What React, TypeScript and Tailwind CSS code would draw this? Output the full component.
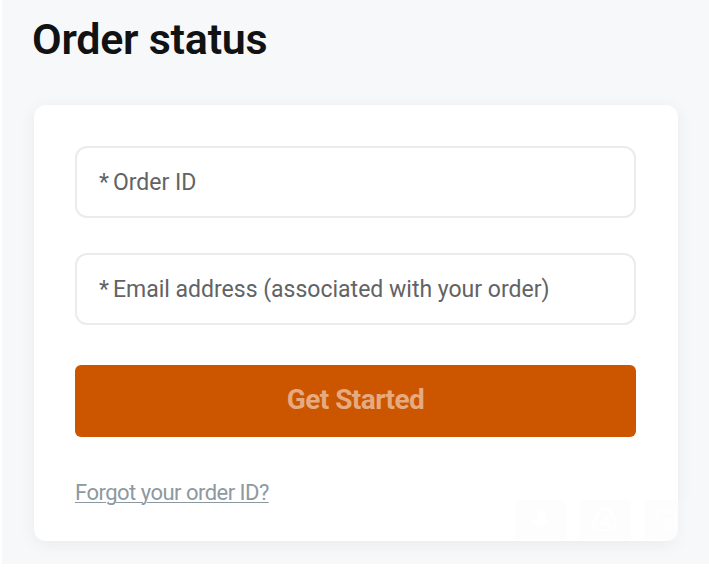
import type { ReactNode } from 'react';

type FieldProps = {
  id: string;
  label: string;
  type?: string;
};

function Field({ id, label, type = 'text' }: FieldProps) {
  return (
    <label
      htmlFor={id}
      className="flex h-[72px] items-center rounded-xl border-2 border-[#ebebeb] bg-white px-[22px] pt-[3px] text-[23px] text-[#626365]"
    >
      <span className="mr-1">*</span>
      <span className="whitespace-nowrap">{label}</span>
      <input id={id} type={type} className="w-0 min-w-0 flex-1 outline-none" />
    </label>
  );
}

function Tool({ label, children }: { label: string; children: ReactNode }) {
  return (
    <button
      type="button"
      aria-label={label}
      className="flex h-10 w-[51px] items-center justify-center rounded-sm bg-[#f9f9f9]/35"
    >
      <svg
        width="30"
        height="30"
        viewBox="0 0 30 30"
        fill="none"
        stroke="white"
        strokeWidth="2.5"
        strokeLinecap="round"
        strokeLinejoin="round"
      >
        {children}
      </svg>
    </button>
  );
}

export default function App() {
  return (
    <main className="relative h-[567px] w-[709px] overflow-hidden bg-white font-[Roboto,sans-serif]">
      <div className="ml-0.5 h-[564px] overflow-hidden bg-[#f6f8fa] pt-[14px] pl-8">
        <h1 className="-ml-[2px] text-[43px] leading-[50px] font-semibold tracking-[-0.25px] text-[#111214]">
          Order status
        </h1>
        <form className="mt-[41px] flex h-[436px] w-[644px] flex-col rounded-xl bg-white pt-[41px] pr-[42px] pl-[41px] shadow-[0_3px_18px_rgba(0,0,0,0.06)]">
          <Field id="order-id" label="Order ID" />
          <div className="mt-[35px]">
            <Field id="email" type="email" label="Email address (associated with your order)" />
          </div>
          <button
            type="button"
            disabled
            className="mt-[40px] h-[72px] rounded-md bg-[#cc5500] pb-0.5 text-[28px] font-bold tracking-[-0.55px] text-[#e6aa80]"
          >
            Get Started
          </button>
          <a
            href="#"
            className="mt-[39px] self-start text-[22px] tracking-[-0.52px] text-[#8d999f] underline decoration-1 underline-offset-2"
          >
            Forgot your order ID?
          </a>
        </form>
      </div>
      <div className="absolute top-[500px] left-[515px] flex gap-[14px]">
        <Tool label="Download">
          <path d="M11 6h8v9h5l-9 9-9-9h5z" fill="white" stroke="none" />
        </Tool>
        <Tool label="Save to Drive">
          <path d="M17 25H6l-4-6 8-15h8l6 11M11 19l4-7 3 7zM19 21h8M23 17v8" />
        </Tool>
        <Tool label="Photos">
          <g opacity="0.6">
            <path d="M14 14H1a6 6 0 0 1 11-5 6 6 0 0 1 7-5 12 12 0 0 1 0 10zM14 14v11a5 5 0 0 1-5-5 8 8 0 0 1 5-6M14 25a5 5 0 0 0 5-5v-6" />
          </g>
        </Tool>
      </div>
    </main>
  );
}
